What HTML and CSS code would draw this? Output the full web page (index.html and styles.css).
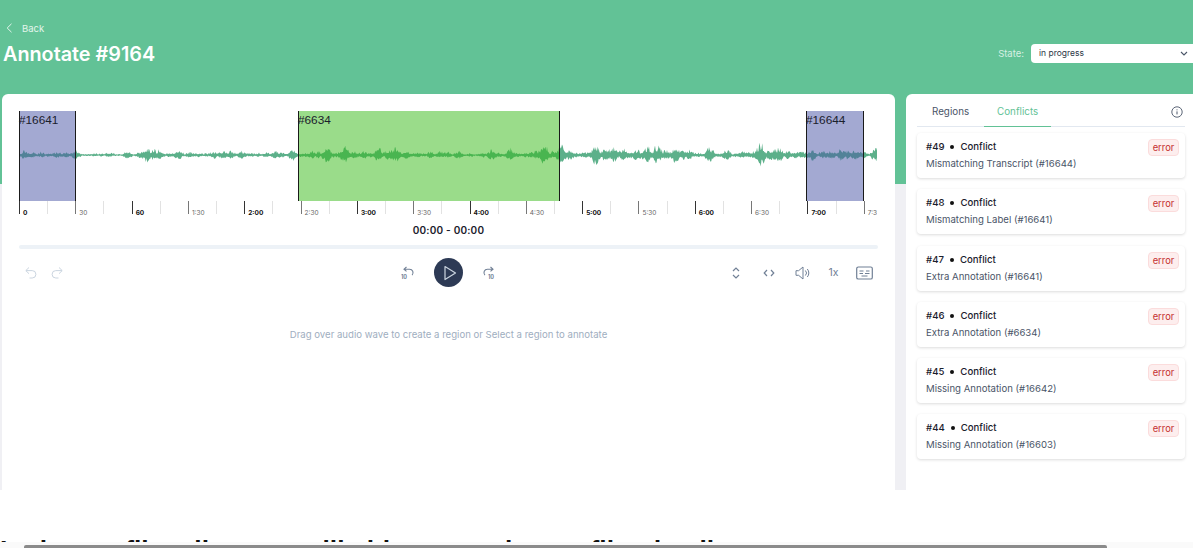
FILE: index.html
```html
<!DOCTYPE html>
<html lang="en">
<head>
<meta charset="UTF-8">
<meta name="viewport" content="width=device-width, initial-scale=1.0">
<title>Annotate #9164</title>
<link rel="stylesheet" href="styles.css">
</head>
<body>

<div class="shell">
    <header class="topbar">
        <div>
            <a class="back" href="#">
                <svg width="7" height="10" viewBox="0 0 7 10"><path d="M5.5 .8 1.2 5l4.3 4.2" fill="none" stroke="currentColor"/></svg>
                Back
            </a>
            <h1>Annotate #9164</h1>
        </div>
        <div class="state">
            <span>State:</span>
            <div class="select">
                in progress
                <svg width="8" height="5" viewBox="0 0 8 5"><path d="M1 1l3 3 3-3" fill="none" stroke="#4a5568" stroke-width="1.1"/></svg>
            </div>
        </div>
    </header>

    <main class="columns">
        <section class="editor">
            <div class="wave">
                <svg id="waveform" class="wave-svg" width="859" height="90" viewBox="0 0 859 90"></svg>
                <div class="region region-blue region-a">#16641</div>
                <div class="region region-green region-b">#6634</div>
                <div class="region region-blue region-c">#16644</div>
            </div>
            <div id="timeline" class="timeline"></div>
            <div class="time">00:00 - 00:00</div>
            <div class="progress"></div>

            <div class="controls">
                <div class="ctl-group ctl-left">
                    <svg width="14" height="14" viewBox="0 0 14 14" class="icon-off"><path d="M5 1.5 1.8 4.6 5 7.7M2 4.6h6.2a3.7 3.7 0 0 1 0 7.4H5.5" fill="none" stroke="currentColor"/></svg>
                    <svg width="14" height="14" viewBox="0 0 14 14" class="icon-off"><path d="M9 1.5l3.2 3.1L9 7.7M12 4.6H5.8a3.7 3.7 0 0 0 0 7.4h2.7" fill="none" stroke="currentColor"/></svg>
                </div>
                <div class="ctl-group ctl-middle">
                    <svg width="14" height="14" viewBox="0 0 14 14" class="icon"><path d="M5.5 1 3 3.2l2.5 2.2M3.2 3.2h5.3a3.5 3.5 0 0 1 2.6 5.9" fill="none" stroke="currentColor" stroke-width="1.1"/><text x="0" y="13" class="skip-num">10</text></svg>
                    <button class="play"><svg width="14" height="16" viewBox="0 0 14 16"><path d="M2 1.5 12.5 8 2 14.5z" fill="none" stroke="#cbd5e0" stroke-width="1.2" stroke-linejoin="round"/></svg></button>
                    <svg width="14" height="14" viewBox="0 0 14 14" class="icon"><path d="M8.5 1l2.5 2.2-2.5 2.2M10.8 3.2H5.5a3.5 3.5 0 0 0-2.6 5.9" fill="none" stroke="currentColor" stroke-width="1.1"/><text x="6" y="13" class="skip-num">10</text></svg>
                </div>
                <div class="ctl-group ctl-right">
                    <svg width="16" height="14" viewBox="-3 0 16 14" class="icon"><path d="M2 5l3-3 3 3M2 9l3 3 3-3" fill="none" stroke="currentColor" stroke-width="1.2"/></svg>
                    <svg width="16" height="10" viewBox="-2 0 16 10" class="icon"><path d="M4 2 1.2 5 4 8M8 2l2.8 3L8 8" fill="none" stroke="currentColor" stroke-width="1.2"/></svg>
                    <svg width="16" height="14" viewBox="0 0 16 14" class="icon"><path d="M1 4.7h2.6L8 1v12L3.6 9.3H1zM10.4 4.5a3.6 3.6 0 0 1 0 5M12.3 3a6 6 0 0 1 0 8" fill="none" stroke="currentColor" stroke-linejoin="round"/></svg>
                    <span class="speed">1x</span>
                    <svg width="17" height="14" viewBox="0 0 17 14" class="icon"><rect x=".7" y="1" width="15.6" height="12" rx="1.6" fill="none" stroke="currentColor" stroke-width="1.2"/><path d="M3.5 5h4M10 5h3.5M3.5 7.5h3.5M9 7.5h4.5M5.5 10h6" stroke="currentColor"/></svg>
                </div>
            </div>

            <p class="hint">Drag over audio wave to create a region or Select a region to annotate</p>
        </section>

        <aside class="sidebar">
            <div class="tabs">
                <span class="tab">Regions</span>
                <span class="tab tab-active">Conflicts</span>
                <svg class="info" width="12" height="12" viewBox="0 0 12 12"><circle cx="6" cy="6" r="5.2" fill="none" stroke="#4a5568" stroke-width=".9"/><path d="M6 5.4v3M6 3.4v.9" stroke="#4a5568"/></svg>
            </div>
            <div class="conflict">
                <div class="conflict-title">#49 <i></i> Conflict</div>
                <div class="conflict-desc">Mismatching Transcript (#16644)</div>
                <span class="badge">error</span>
            </div>
            <div class="conflict">
                <div class="conflict-title">#48 <i></i> Conflict</div>
                <div class="conflict-desc">Mismatching Label (#16641)</div>
                <span class="badge">error</span>
            </div>
            <div class="conflict">
                <div class="conflict-title">#47 <i></i> Conflict</div>
                <div class="conflict-desc">Extra Annotation (#16641)</div>
                <span class="badge">error</span>
            </div>
            <div class="conflict">
                <div class="conflict-title">#46 <i></i> Conflict</div>
                <div class="conflict-desc">Extra Annotation (#6634)</div>
                <span class="badge">error</span>
            </div>
            <div class="conflict">
                <div class="conflict-title">#45 <i></i> Conflict</div>
                <div class="conflict-desc">Missing Annotation (#16642)</div>
                <span class="badge">error</span>
            </div>
            <div class="conflict">
                <div class="conflict-title">#44 <i></i> Conflict</div>
                <div class="conflict-desc">Missing Annotation (#16603)</div>
                <span class="badge">error</span>
            </div>
        </aside>
    </main>
</div>

<div class="below">In the conflicts list, you will able to see the conflict details</div>

<div class="scrollbar"><div class="scrollbar-thumb"></div></div>

<script src="script.js"></script>
</body>
</html>
```

FILE: styles.css
```css
/* Annotate page */
html, body {
    margin: 0;
    height: 548px;
    overflow: hidden;
    background: #fff;
    font-family: Inter, "Noto Sans", sans-serif;
    color: #1a202c;
}
.shell {
    height: 490px;
    overflow: hidden;
    background: linear-gradient(#62c296 184px, #f0f0f4 184px);
}

/* Header */
.topbar {
    height: 94px;
    box-sizing: border-box;
    padding: 22px 0 0 3px;
    display: flex;
    justify-content: space-between;
    align-items: flex-start;
    color: #fff;
}
.back {
    display: flex;
    align-items: center;
    gap: 9px;
    padding-left: 3px;
    height: 12px;
    font-size: 9.5px;
    color: #e3f5ec;
    text-decoration: none;
}
h1 {
    margin: 6px 0 0;
    font-size: 19.8px;
    line-height: 28px;
    font-weight: 600;
}
.state {
    display: flex;
    align-items: center;
    gap: 7px;
    margin-top: 22px;
    font-size: 9.5px;
    color: #d6f0e3;
}
.select {
    width: 162px;
    height: 19px;
    box-sizing: border-box;
    padding: 0 5px 1px 8px;
    background: #fff;
    border-radius: 4px 0 0 4px;
    display: flex;
    align-items: center;
    justify-content: space-between;
    font-size: 8.5px;
    color: #2d3748;
}

.columns {
    display: flex;
    gap: 11px;
    padding-left: 2px;
    height: 396px;
}

/* Editor */
.editor {
    width: 893px;
    box-sizing: border-box;
    padding: 17px 17px 0;
    background: #fff;
    border-radius: 6px 6px 0 0;
}
.wave {
    position: relative;
    height: 90px;
    width: 859px;
}
.wave-svg {
    display: block;
}
.region {
    position: absolute;
    top: 0;
    height: 90px;
    box-sizing: border-box;
    border-left: 1.5px solid #1a1a1a;
    border-right: 1.5px solid #1a1a1a;
    font-family: "Liberation Sans", sans-serif;
    font-size: 11.8px;
    line-height: 18px;
    color: #1a202c;
    text-indent: -1px;
}
.region-blue {
    background: rgba(72, 84, 165, 0.5);
}
.region-green {
    background: rgba(53, 185, 21, 0.5);
}
.region-a {
    left: 0;
    width: 56.5px;
}
.region-b {
    left: 279px;
    width: 262px;
}
.region-c {
    left: 787px;
    width: 58px;
}

.timeline {
    display: flex;
    width: 858px;
    height: 20px;
    overflow: hidden;
}
.tick {
    flex: 0 0 28.17px;
    box-sizing: border-box;
    height: 13px;
    border-left: 1px solid #e2e2e2;
    position: relative;
}
.tick-major {
    border-left: 1.3px solid #777;
}
.tick-minute {
    border-left: 1.5px solid #333;
}
.tick-label {
    position: absolute;
    left: 3px;
    top: 8px;
    font-size: 6.5px;
    line-height: 9px;
    color: #666;
    white-space: nowrap;
}
.tick-minute .tick-label {
    color: #111;
    font-weight: 700;
}

.time {
    margin-top: 2px;
    text-align: center;
    font-size: 10px;
    line-height: 14px;
    font-weight: 600;
    letter-spacing: .2px;
}
.progress {
    margin-top: 8px;
    height: 4px;
    width: 859px;
    border-radius: 2px;
    background: #edf2f7;
}

.controls {
    margin-top: 9px;
    height: 29px;
    width: 859px;
    position: relative;
    display: flex;
    justify-content: space-between;
    align-items: center;
}
.ctl-group {
    display: flex;
    align-items: center;
}
.ctl-left {
    gap: 12px;
    padding-left: 5px;
}
.ctl-middle {
    position: absolute;
    left: 382px;
    gap: 19px;
}
.ctl-right {
    gap: 17.5px;
    padding-right: 5px;
}
.icon {
    color: #718096;
    display: block;
}
.icon-off {
    color: #cbd5e0;
    display: block;
}
.skip-num {
    font-size: 5.5px;
    font-weight: 700;
    fill: currentColor;
}
.play {
    width: 29px;
    height: 29px;
    padding: 0 0 0 2px;
    border: none;
    border-radius: 50%;
    background: #2d3a55;
    display: flex;
    align-items: center;
    justify-content: center;
}
.speed {
    font-size: 10.5px;
    color: #718096;
}
.hint {
    margin: 41px 0 0;
    text-align: center;
    font-size: 9.6px;
    line-height: 14px;
    color: #a0aec0;
}

/* Conflicts list */
.sidebar {
    flex: 1;
    box-sizing: border-box;
    padding: 0 8px 0 11px;
    background: #fff;
    border-radius: 6px 0 0 0;
}
.tabs {
    position: relative;
    height: 32px;
    display: flex;
    align-items: flex-end;
    border-bottom: 1px solid #e2e8f0;
    margin-bottom: 6px;
}
.tab {
    box-sizing: border-box;
    height: 26px;
    padding: 5px 15px 0 15px;
    font-size: 9.8px;
    color: #4a5568;
    margin-bottom: -1px;
}
.tab-active {
    color: #62c296;
    padding: 5px 13px 0;
    border-bottom: 1.5px solid #62c296;
}
.info {
    position: absolute;
    right: 2px;
    top: 12px;
}
.conflict {
    position: relative;
    box-sizing: border-box;
    height: 45px;
    margin-bottom: 11.3px;
    padding: 7px 9px;
    border-radius: 4px;
    background: #fff;
    box-shadow: 0 1px 3px rgba(0, 0, 0, .14);
    font-size: 9.6px;
}
.conflict-title {
    line-height: 14px;
    font-weight: 500;
    color: #1a202c;
    display: flex;
    align-items: center;
    gap: 6px;
}
.conflict-title i {
    width: 4px;
    height: 4px;
    border-radius: 50%;
    background: #111;
}
.conflict-desc {
    margin-top: 3px;
    line-height: 13px;
    color: #4a5568;
}
.badge {
    position: absolute;
    top: 6px;
    right: 6px;
    box-sizing: border-box;
    width: 31px;
    height: 17px;
    line-height: 15px;
    text-align: center;
    border: 1px solid #fbdcdc;
    border-radius: 4px;
    background: #fdeeee;
    color: #c53030;
    font-size: 9.4px;
}

/* Cut off by the bottom of the window, only the top of the letters shows */
.below {
    height: 52px;
    overflow: hidden;
    box-sizing: border-box;
    padding-top: 44px;
    font-family: "Liberation Sans", sans-serif;
    font-size: 26.5px;
    line-height: 32px;
    font-weight: 700;
    color: #111;
    white-space: nowrap;
}
.scrollbar {
    position: fixed;
    left: 0;
    right: 0;
    bottom: 0;
    height: 6px;
    padding-top: 3px;
    box-sizing: border-box;
    background: #fafafa;
}
.scrollbar-thumb {
    margin-left: 24px;
    width: 1083px;
    height: 3px;
    border-radius: 2px 2px 0 0;
    background: #8b8b8b;
}
```

FILE: script.js
```js
// Envelope of the recording, pairs of x position and amplitude in px
const envelope = [
    [0, 4], [20, 5], [35, 4], [50, 4], [58, 4], [75, 3], [110, 3], [118, 5], [122, 10], [129, 12],
    [135, 16], [140, 9], [144, 3], [150, 6], [160, 4], [180, 4], [195, 6], [205, 5], [225, 4],
    [270, 5], [285, 7], [295, 8], [310, 9], [325, 7], [345, 8], [370, 8], [395, 5], [430, 4],
    [470, 5], [500, 6], [520, 11], [535, 9], [550, 11], [560, 6], [575, 11], [590, 8], [605, 10],
    [625, 12], [645, 7], [665, 13], [680, 4], [695, 7], [715, 5], [735, 12], [755, 9], [780, 8],
    [805, 4], [825, 10], [840, 8], [850, 3], [858, 7]
];

function ampAt(x) {
    for (let i = 1; i < envelope.length; i++) {
        if (x <= envelope[i][0]) {
            const a = envelope[i - 1], b = envelope[i];
            return a[1] + (b[1] - a[1]) * (x - a[0]) / (b[0] - a[0]);
        }
    }
    return 2;
}

// Small seeded random so every run draws the same wave
let seed = 9164;
function rand() {
    seed = (seed * 16807) % 2147483647;
    return seed / 2147483647;
}

function drawWave() {
    const top = [], bottom = [];
    for (let x = 0; x <= 858; x += 0.75) {
        const a = ampAt(x);
        // bursts of sound with quieter stretches between them
        const burst = 0.3 + 0.7 * Math.pow(Math.abs(Math.sin(x / 5.3) * Math.cos(x / 17) + 0.35 * Math.sin(x / 2.1)), 1.2);
        const r = rand();
        const up = Math.max(0.6, a * burst * (0.35 + r * r * 0.8));
        const down = Math.max(0.6, a * burst * (0.35 + rand() * 0.6));
        top.push(x + ',' + (44 - up).toFixed(1));
        bottom.unshift(x + ',' + (44 + down).toFixed(1));
    }
    document.getElementById('waveform').innerHTML =
        '<polygon fill="#5cb08a" points="' + top.concat(bottom).join(' ') + '"/>';
}

function drawTimeline() {
    let html = '';
    for (let i = 0; i < 31; i++) {
        if (i % 2 === 1) {
            html += '<div class="tick"></div>';
            continue;
        }
        const secs = i * 15;
        const m = Math.floor(secs / 60);
        const s = secs % 60;
        let label = m + ':' + (s === 0 ? '00' : s);
        if (secs === 0) label = '0';
        if (secs === 30) label = '30';
        if (secs === 60) label = '60';
        html += '<div class="tick ' + (s === 0 ? 'tick-minute' : 'tick-major') + '"><span class="tick-label">' + label + '</span></div>';
    }
    document.getElementById('timeline').innerHTML = html;
}

drawWave();
drawTimeline();
```
